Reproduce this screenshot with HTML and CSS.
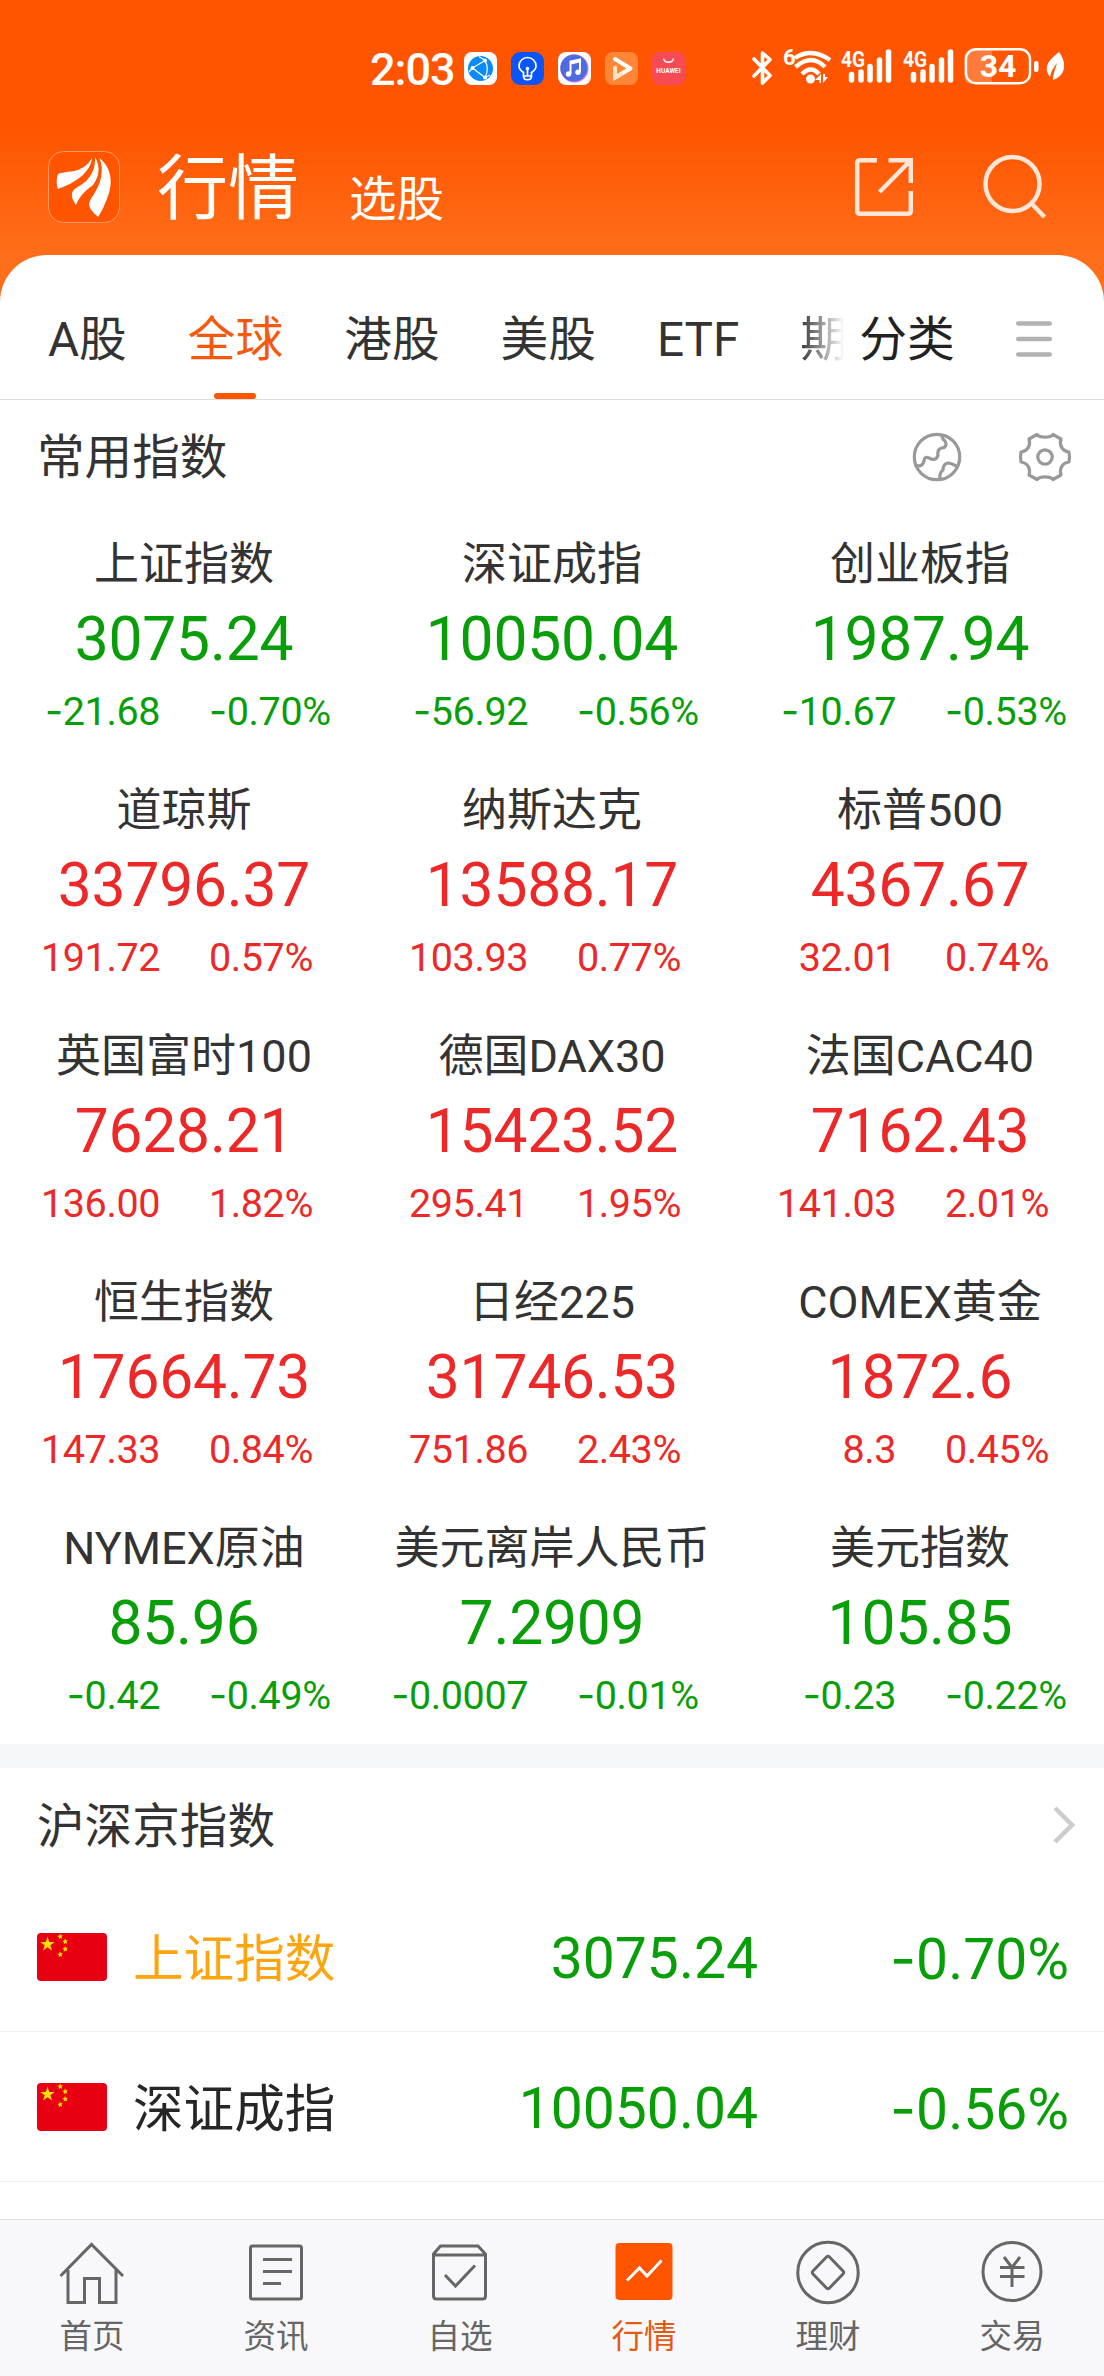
FILE: index.html
```html
<!DOCTYPE html>
<html lang="zh-CN">
<head>
<meta charset="utf-8">
<title>行情</title>
<link rel="stylesheet" href="styles.css">
</head>
<body>
<div class="header">
	<div class="statusbar">
		<span class="time">2:03</span>
		<div class="apps">
			<svg class="app" viewBox="0 0 33 33"><rect width="33" height="33" rx="8" fill="#fff"/><circle cx="16.5" cy="16.5" r="12.5" fill="#0a8bf5"/><path d="M21 8.5L8.5 16L21 25.5C24 20 24 14 21 8.5zM21 8.5L15 4.500M8.500 16L5 20M21 25.500L26 23" fill="none" stroke="#fff" stroke-width="1.200"/><circle cx="21" cy="8.500" r="2" fill="#fff"/><circle cx="8.500" cy="16" r="2" fill="#fff"/><circle cx="21" cy="25.500" r="2" fill="#fff"/></svg>
			<svg class="app" viewBox="0 0 33 33"><rect width="33" height="33" rx="9" fill="#0a55fa"/><path d="M12.500 24v-3.500C9.500 18.500 8 16.500 8 14a8.500 8.500 0 0 1 17 0c0 2.500-1.500 4.500-4.500 6.500V24zM12.500 24c0 5 8 5 8 0M16.500 24v-7" fill="none" stroke="#fff" stroke-width="1.700"/><circle cx="16.500" cy="16.500" r="1.800" fill="#fff"/></svg>
			<svg class="app" viewBox="0 0 33 33"><rect width="33" height="33" rx="8" fill="#fff"/><circle cx="16.500" cy="16.500" r="14" fill="#c77df0"/><circle cx="15.800" cy="16" r="13.500" fill="#4f6be0"/><path d="M12.500 22V9.500L22 7.500V20" fill="none" stroke="#fff" stroke-width="2"/><path d="M12.500 9.500L22 7.500v3l-9.500 2z" fill="#fff"/><circle cx="10.500" cy="22" r="2.700" fill="#fff"/><circle cx="20" cy="20.200" r="2.700" fill="#fff"/></svg>
			<svg class="app" viewBox="0 0 33 33"><rect width="33" height="33" rx="8" fill="#ff8636"/><path d="M10 7L25.500 16.500L10 25.500" fill="none" stroke="#fff" stroke-width="4" stroke-linecap="round" stroke-linejoin="round"/><path d="M10 15.500v10L16 22" fill="none" stroke="#ffe0c0" stroke-width="4" stroke-linecap="round"/></svg>
			<svg class="app" viewBox="0 0 33 33"><rect width="33" height="33" rx="8" fill="#f64a55"/><path d="M11.500 6.500c1 5 9 5 10 0" fill="none" stroke="#fff" stroke-width="1.300"/><text x="16.500" y="21.300" class="apptext">HUAWEI</text></svg>
		</div>
		<svg class="signals" viewBox="0 0 320 40">
			<g fill="none" stroke="#fff" stroke-width="3.600" stroke-linecap="round" stroke-linejoin="round">
				<path d="M5 11L21 27.500L13.500 35V5L21 11.500L5 28"/>
			</g>
			<text x="34" y="16.500" class="net">6</text>
			<g fill="none" stroke="#fff" stroke-width="4.500" stroke-linecap="butt">
				<path d="M46 10Q62.500-1 81 12"/>
				<path d="M46.500 19Q62.500 5 76 19"/>
				<path d="M53 26Q62 17 70 26"/>
			</g>
			<circle cx="61.500" cy="31" r="4.500" fill="#fff"/>
			<path d="M66 32l6-6v9h-1.500v-3zM74 26v9l5-6h-3v-3z" fill="#fff"/>
			<g class="sim">
				<text x="92" y="18.500" class="net" textLength="24" lengthAdjust="spacingAndGlyphs">4G</text>
				<path d="M102.500 26.500V32M112 24V32M121 18.500V32M130.500 12V32M139.500 4V32"/>
				<text x="154" y="18.500" class="net" textLength="24" lengthAdjust="spacingAndGlyphs">4G</text>
				<path d="M164.500 26.500V32M174 24V32M183 18.500V32M192.500 12V32M201.500 4V32"/>
			</g>
			<path d="M223 2h20v34h-20q-8 0-8-9V11q0-9 8-9z" fill="#ff7b3c"/>
			<rect x="217" y="1.200" width="64" height="34" rx="10" fill="none" stroke="#fff" stroke-width="2.400"/>
			<text x="249" y="29" class="battery">34</text>
			<rect x="285" y="13" width="4.500" height="11" rx="2" fill="#fff"/>
			<path d="M310 4C298 13 296 19 299 26L301 29C302 23 305 19 308 15C306 22 304 26 304 32C314 29 320 18 310 4z" fill="#fff"/>
		</svg>
	</div>
	<div class="titlebar">
		<svg class="logo" viewBox="0 0 72 72"><rect x=".5" y=".5" width="71" height="71" rx="15" fill="#ff5500" stroke="#ff9a66"/><path d="M44 7C43 17 35 29 10 38L9 35Q8 28 10 23Q15 21 24 20.500Q38 18 44 7z" fill="#fff"/><path d="M47 6Q55 20 45 34Q32 43 28 54Q23 47 24 42Q25 38 33 34Q48 24 47 6z" fill="#fff"/><path d="M51.500 7Q67 20 61 42Q56 57 50 66Q42 59 41 54Q41 50 46 43Q58 24 51.500 7z" fill="#fff"/></svg>
		<h1>行情</h1>
		<h2>选股</h2>
		<svg class="share" viewBox="0 0 58 58"><path d="M22 2.200H5Q2.200 2.200 2.200 5V53Q2.200 55.800 5 55.800H53Q55.800 55.800 55.800 53V33M33.500 2.200H55.800V25M55 3L24.500 34" /></svg>
		<svg class="search" viewBox="0 0 64 64"><circle cx="29.500" cy="29" r="27"/><path d="M48 48L61.500 62"/></svg>
	</div>
</div>

<div class="card">
	<div class="tabs">
		<span class="tab">A股</span>
		<span class="tab active">全球</span>
		<span class="tab">港股</span>
		<span class="tab">美股</span>
		<span class="tab">ETF</span>
		<span class="tab fade">期</span>
		<span class="tab sort">分类</span>
		<svg class="menu" viewBox="0 0 36 40"><path d="M2.200 4.500H33.800M2.200 20H33.800M2.200 35.500H33.800"/></svg>
	</div>

	<div class="sectiontitle">
		<h3>常用指数</h3>
		<svg class="globe" viewBox="0 0 50 50"><circle cx="25" cy="25" r="22.700"/><path d="M30 3Q30 7 33 9Q36 15 30 16Q25 17 26 23Q24 30 17 26Q12 24 12 29Q10 36 3 33M28 47Q27 41 31 38Q31 32 36 31Q39 31 46 35"/></svg>
		<svg class="gear" viewBox="0 0 52 50"><path d="M18 2.500C21 6 31 6 34 2.500L42 7C40 13 43 19 50 20Q51 25 50 30C43 31 40 37 42 43L34 47.500C31 44 21 44 18 47.500L10 43C12 37 9 31 2 30Q1 25 2 20C9 19 12 13 10 7z"/><circle cx="26" cy="25" r="7.200"/></svg>
	</div>

	<div class="indexes">
		<div class="index down"><div class="name">上证指数</div><div class="price">3075.24</div><div class="change"><span><i>-</i>21.68</span><span><i>-</i>0.70%</span></div></div>
		<div class="index down"><div class="name">深证成指</div><div class="price">10050.04</div><div class="change"><span><i>-</i>56.92</span><span><i>-</i>0.56%</span></div></div>
		<div class="index down"><div class="name">创业板指</div><div class="price">1987.94</div><div class="change"><span><i>-</i>10.67</span><span><i>-</i>0.53%</span></div></div>

		<div class="index up"><div class="name">道琼斯</div><div class="price">33796.37</div><div class="change"><span>191.72</span><span>0.57%</span></div></div>
		<div class="index up"><div class="name">纳斯达克</div><div class="price">13588.17</div><div class="change"><span>103.93</span><span>0.77%</span></div></div>
		<div class="index up"><div class="name">标普500</div><div class="price">4367.67</div><div class="change"><span>32.01</span><span>0.74%</span></div></div>

		<div class="index up"><div class="name">英国富时100</div><div class="price">7628.21</div><div class="change"><span>136.00</span><span>1.82%</span></div></div>
		<div class="index up"><div class="name">德国DAX30</div><div class="price">15423.52</div><div class="change"><span>295.41</span><span>1.95%</span></div></div>
		<div class="index up"><div class="name">法国CAC40</div><div class="price">7162.43</div><div class="change"><span>141.03</span><span>2.01%</span></div></div>

		<div class="index up"><div class="name">恒生指数</div><div class="price">17664.73</div><div class="change"><span>147.33</span><span>0.84%</span></div></div>
		<div class="index up"><div class="name">日经225</div><div class="price">31746.53</div><div class="change"><span>751.86</span><span>2.43%</span></div></div>
		<div class="index up"><div class="name">COMEX黄金</div><div class="price">1872.6</div><div class="change"><span>8.3</span><span>0.45%</span></div></div>

		<div class="index down"><div class="name">NYMEX原油</div><div class="price">85.96</div><div class="change"><span><i>-</i>0.42</span><span><i>-</i>0.49%</span></div></div>
		<div class="index down"><div class="name">美元离岸人民币</div><div class="price">7.2909</div><div class="change"><span><i>-</i>0.0007</span><span><i>-</i>0.01%</span></div></div>
		<div class="index down"><div class="name">美元指数</div><div class="price">105.85</div><div class="change"><span><i>-</i>0.23</span><span><i>-</i>0.22%</span></div></div>
	</div>

	<div class="band"></div>

	<div class="sectiontitle list">
		<h3>沪深京指数</h3>
		<svg class="chevron" viewBox="0 0 22 38"><path d="M2 2L19 19L2 36"/></svg>
	</div>
	<div class="row">
		<svg class="flag" viewBox="0 0 70 48"><rect width="70" height="48" rx="4" fill="#e60012"/><g fill="#ffe100"><path d="M10.500 3.500l1.700 5.400h5.600l-4.500 3.300 1.700 5.400-4.500-3.300-4.500 3.300 1.700-5.400-4.500-3.300h5.600z"/><path d="M23 .5l.8 1.800 2-.1-1.300 1.600.8 1.900-1.900-.8-1.600 1.300.1-2.100-1.700-1 2-.5zM28 5.500l.8 1.800 2-.1-1.300 1.600.8 1.900-1.900-.8-1.600 1.300.1-2.100-1.700-1 2-.5zM28 13l.8 1.800 2-.1-1.300 1.600.8 1.900-1.900-.8-1.600 1.300.1-2.100-1.700-1 2-.5zM23 18.500l.8 1.800 2-.1-1.300 1.600.8 1.900-1.900-.8-1.600 1.300.1-2.100-1.700-1 2-.5z"/></g></svg>
		<span class="stock viewed">上证指数</span>
		<span class="last">3075.24</span>
		<span class="percent"><i>-</i>0.70%</span>
	</div>
	<div class="row">
		<svg class="flag" viewBox="0 0 70 48"><rect width="70" height="48" rx="4" fill="#e60012"/><g fill="#ffe100"><path d="M10.500 3.500l1.700 5.400h5.600l-4.500 3.300 1.700 5.400-4.500-3.300-4.500 3.300 1.700-5.400-4.500-3.300h5.600z"/><path d="M23 .5l.8 1.800 2-.1-1.300 1.600.8 1.900-1.900-.8-1.600 1.300.1-2.100-1.700-1 2-.5zM28 5.500l.8 1.800 2-.1-1.300 1.600.8 1.900-1.900-.8-1.600 1.300.1-2.100-1.700-1 2-.5zM28 13l.8 1.800 2-.1-1.300 1.600.8 1.900-1.900-.8-1.600 1.300.1-2.100-1.700-1 2-.5zM23 18.500l.8 1.800 2-.1-1.300 1.600.8 1.900-1.900-.8-1.600 1.300.1-2.100-1.700-1 2-.5z"/></g></svg>
		<span class="stock">深证成指</span>
		<span class="last">10050.04</span>
		<span class="percent"><i>-</i>0.56%</span>
	</div>
</div>

<div class="navbar">
	<div class="nav">
		<svg viewBox="0 0 66 66"><path d="M1.500 35L32.500 3.500L64 35M9 29V61.500H25.500V37.500H40.500V61.500H57V29"/></svg>
		<span>首页</span>
	</div>
	<div class="nav">
		<svg viewBox="0 0 66 66"><rect x="7.500" y="5" width="51" height="53" rx="2"/><path d="M20 18.500H49M20 30.500H49M20 42.500H38"/></svg>
		<span>资讯</span>
	</div>
	<div class="nav">
		<svg viewBox="0 0 66 66"><path d="M6.500 13L13.500 5H51L58.500 13V55Q58.500 58 55.500 58H9.500Q6.500 58 6.500 55zM6.500 14H58.500M18 34L28.500 45L48 24.500"/></svg>
		<span>自选</span>
	</div>
	<div class="nav current">
		<svg viewBox="0 0 66 66"><rect x="4.500" y="2" width="57" height="57" rx="4" class="solid"/><path d="M16 39.500L28.500 27L36 35L50.500 19.500" class="trend"/></svg>
		<span>行情</span>
	</div>
	<div class="nav">
		<svg viewBox="0 0 66 66"><circle cx="33" cy="31.500" r="30.200"/><path d="M34.500 16L48 30Q49.500 31.500 48 33L34.500 47Q33 48.500 31.500 47L18 33Q16.500 31.500 18 30L31.500 16Q33 14.500 34.500 16z"/></svg>
		<span>理财</span>
	</div>
	<div class="nav">
		<svg viewBox="0 0 66 66"><circle cx="33" cy="30.500" r="29"/><path d="M25 16L33 26.500L41 16M21 26.500H45.500M21 35.500H45.500M33 26.500V46"/></svg>
		<span>交易</span>
	</div>
</div>
</body>
</html>
```
FILE: styles.css
```css
html, body {
	margin: 0;
	background: white;
	color: #333;
	font-family: Roboto, "Noto Sans CJK SC", sans-serif;
}
body {
	display: flex;
	flex-direction: column;
	height: 2376px;
	overflow: hidden;
}
h1, h2, h3 {
	margin: 0;
	font-weight: normal;
}
svg {
	display: block;
	fill: none;
	flex: none;
	overflow: visible;
}
/* wide minus sign */
i {
	font-family: Inter, sans-serif;
	font-style: normal;
}

/* header */
.header {
	height: 310px;
	margin-bottom: -55px;
	flex: none;
	background: linear-gradient(#ff5500 130px, #ff6e1a 255px);
	color: white;
}
.statusbar {
	display: flex;
	align-items: center;
	height: 136px;
	padding-left: 370px;
}
.time {
	width: 94px;
	padding-top: 2px;
	font-size: 45px;
	font-weight: 500;
	letter-spacing: -1px;
}
.apps {
	display: flex;
	gap: 14px;
	width: 285px;
}
.app {
	width: 33px;
	height: 33px;
}
.apptext {
	fill: white;
	font-size: 6.5px;
	font-weight: bold;
	text-anchor: middle;
}
.signals {
	width: 320px;
	height: 40px;
}
.net {
	fill: white;
	font-size: 22px;
	font-weight: bold;
}
.battery {
	fill: white;
	font-size: 32px;
	font-weight: bold;
	text-anchor: middle;
}
.sim path {
	stroke: white;
	stroke-width: 5.5;
	stroke-linecap: round;
}
.titlebar {
	display: flex;
	align-items: center;
	height: 102px;
	padding: 0 57px 0 48px;
}
.logo {
	width: 72px;
	height: 72px;
}
.titlebar h1 {
	margin: 4px 0 0 37px;
	font-size: 71px;
	line-height: 100px;
}
.titlebar h2 {
	margin: 25px auto 0 50px;
	font-size: 47.5px;
	line-height: 70px;
}
.share, .search {
	stroke: #ffe6d8;
	stroke-width: 4.5;
}
.share {
	width: 58px;
	height: 58px;
}
.search {
	width: 64px;
	height: 64px;
	margin-left: 70px;
}

/* content */
.card {
	flex: 1;
	min-height: 0;
	overflow: hidden;
	background: white;
	border-radius: 47px 47px 0 0;
}
.tabs {
	display: flex;
	height: 144px;
	padding-left: 48px;
	border-bottom: 1px solid #ddd;
	font-size: 47.7px;
	line-height: 171px;
}
.tab {
	margin-right: 61px;
	white-space: nowrap;
}
.active {
	display: flex;
	flex-direction: column;
	align-items: center;
	color: #f4590c;
}
.active::after {
	content: "";
	width: 42px;
	height: 6px;
	margin-top: -33px;
	border-radius: 3px;
	background: #ff5500;
}
.fade {
	width: 48px;
	margin-right: 11px;
	background: linear-gradient(90deg, #333, #fff 92%);
	-webkit-background-clip: text;
	background-clip: text;
	color: transparent;
}
.sort {
	color: #222;
}
.menu {
	width: 36px;
	height: 40px;
	margin-top: 64px;
	stroke: #b2b2b2;
	stroke-width: 4.4;
	stroke-linecap: round;
}
.sectiontitle {
	display: flex;
	align-items: center;
	height: 113px;
	padding: 0 33px 0 37px;
}
.sectiontitle h3 {
	flex: 1;
	padding-top: 3px;
	font-size: 47.6px;
	line-height: 70px;
}
.globe, .gear {
	stroke: #999;
	stroke-width: 3.2;
	stroke-linejoin: round;
}
.globe {
	width: 50px;
	height: 50px;
}
.gear {
	width: 52px;
	height: 50px;
	margin-left: 57px;
}
.indexes {
	display: grid;
	grid-template-columns: repeat(3, 1fr);
	grid-auto-rows: 246px;
}
.index {
	padding-top: 19px;
	text-align: center;
}
.name {
	font-size: 45px;
	line-height: 66px;
}
.price {
	font-size: 60.5px;
	line-height: 84px;
	letter-spacing: -0.2px;
}
.change {
	display: grid;
	grid-template-columns: 160px 1fr;
	gap: 49px;
	font-size: 39.5px;
	line-height: 59px;
	letter-spacing: -0.4px;
	text-align: left;
}
.change span:first-child {
	text-align: right;
}
.up .price, .up .change {
	color: #ec2828;
}
.down .price, .down .change {
	color: #089e08;
}
.band {
	height: 24px;
	margin-top: 1px;
	background: #f6f7f9;
}
.list {
	height: 114px;
	padding-right: 29px;
}
.chevron {
	width: 22px;
	height: 38px;
	stroke: #ccc;
	stroke-width: 4.5;
}
.row {
	display: flex;
	align-items: center;
	height: 149px;
	padding: 0 35px 0 37px;
	border-bottom: 1px solid #eee;
	font-size: 57px;
	color: #089e08;
}
.flag {
	width: 70px;
	height: 48px;
}
.stock {
	margin-left: 26px;
	padding-bottom: 4px;
	font-size: 50.6px;
	color: #262626;
}
.viewed {
	color: #fca50f;
}
.last {
	flex: 1;
	padding-top: 4px;
	text-align: right;
}
.percent {
	width: 311px;
	padding-top: 4px;
	text-align: right;
}

/* bottom navigation */
.navbar {
	display: flex;
	flex: none;
	height: 156px;
	border-top: 1px solid #e0e0e0;
	background: #f8f8fa;
}
.nav {
	flex: 1;
	display: flex;
	flex-direction: column;
	align-items: center;
	padding-top: 21px;
	font-size: 32.5px;
	line-height: 40px;
	color: #666;
}
.nav svg {
	width: 66px;
	height: 66px;
	margin-bottom: 10px;
	stroke: #666;
	stroke-width: 3;
}
.nav .solid {
	fill: #ff5500;
	stroke: none;
}
.nav .trend {
	stroke: white;
}
.current {
	color: #e35a14;
}
```
